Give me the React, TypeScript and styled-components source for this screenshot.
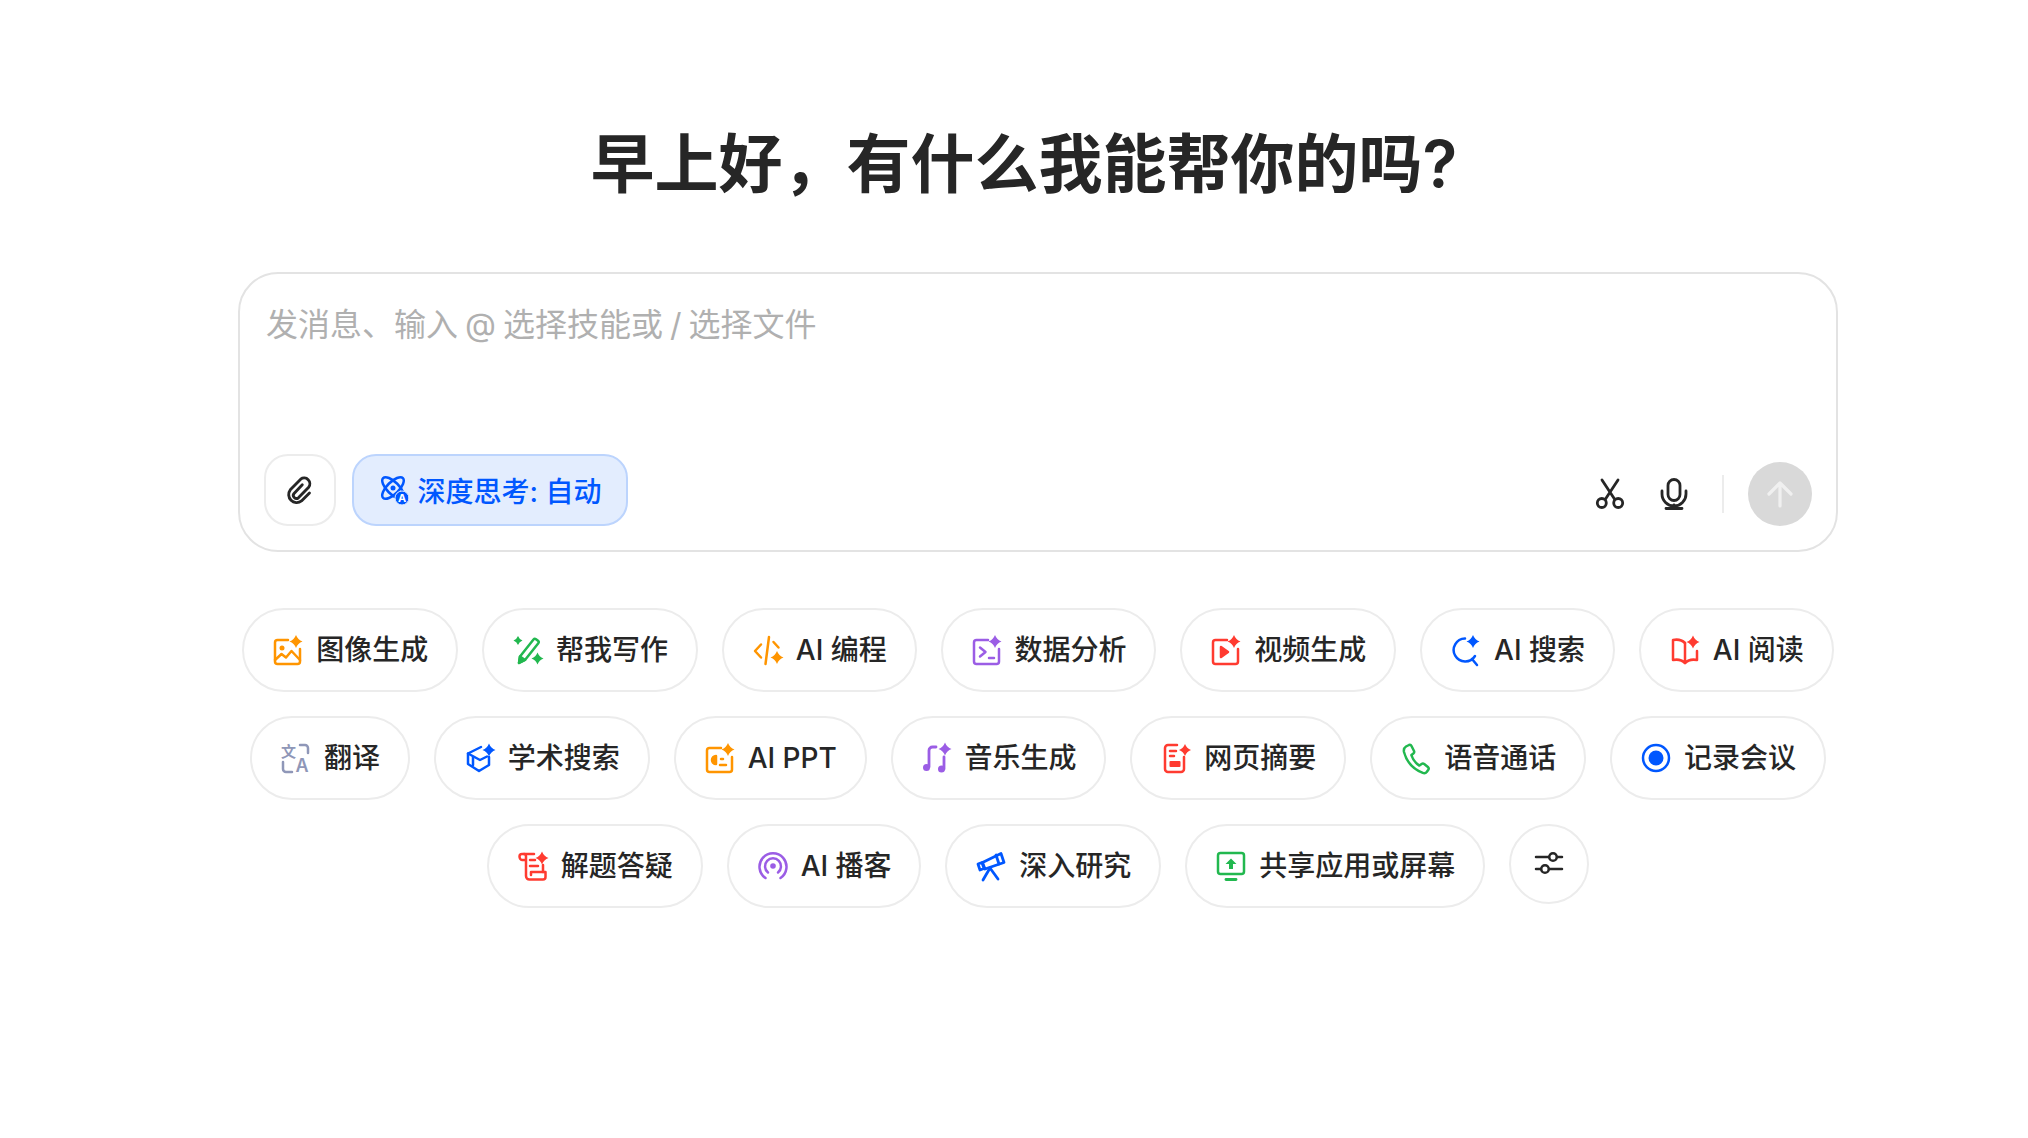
import React from 'react';
import styled, { createGlobalStyle } from 'styled-components';

const ORANGE = '#ff9500';
const GREEN = '#22b84f';
const PURPLE = '#9b5de5';
const RED = '#ff3b30';
const BLUE = '#0057ff';
const SLATE = '#8f97b8';
const DARK = '#262626';

const Star = ({ x, y, r, color }: { x: number; y: number; r: number; color: string }) => (
  <path
    d={`M${x} ${y - r}Q${x + r * 0.28} ${y - r * 0.28} ${x + r} ${y}Q${x + r * 0.28} ${y + r * 0.28} ${x} ${y + r}Q${x - r * 0.28} ${y + r * 0.28} ${x - r} ${y}Q${x - r * 0.28} ${y - r * 0.28} ${x} ${y - r}Z`}
    fill={color}
    stroke="none"
  />
);

const Glyph = ({ color, children }: { color: string; children: React.ReactNode }) => (
  <IconSvg viewBox="0 0 32 32" fill="none" stroke={color} strokeWidth="2.5" strokeLinecap="round" strokeLinejoin="round">
    {children}
  </IconSvg>
);

const icons: Record<string, React.ReactNode> = {
  image: (
    <Glyph color={ORANGE}>
      <path d="M16 6H5.500A2.500 2.500 0 0 0 3 8.500V27.500A2.500 2.500 0 0 0 5.500 30H25.500A2.500 2.500 0 0 0 28 27.500V15" />
      <path d="M3 26l6.500-6 4.500 3.500 5.500-6.500 8.500 9" />
      <circle cx="10" cy="14" r="2.500" fill={ORANGE} stroke="none" />
      <Star x={24} y={7.500} r={6.500} color={ORANGE} />
    </Glyph>
  ),
  pen: (
    <Glyph color={GREEN}>
      <path d="M7 29l1-6.500L21.500 5.500a1.800 1.800 0 0 1 2.500-.3l2 1.600a1.800 1.800 0 0 1 .3 2.500L13 26z" />
      <path d="M7 29l6-3-5-3.500z" fill={GREEN} />
      <Star x={6} y={6.500} r={4.500} color={GREEN} />
      <Star x={25.500} y={24.500} r={6} color={GREEN} />
    </Glyph>
  ),
  code: (
    <Glyph color={ORANGE}>
      <path d="M9 10.500l-6 6.500 6 6.500" />
      <path d="M17 3l-3.500 27" />
      <path d="M21.500 8l5 5.500" />
      <Star x={25} y={23.500} r={6.500} color={ORANGE} />
    </Glyph>
  ),
  data: (
    <Glyph color={PURPLE}>
      <path d="M17 6H5.500A2.500 2.500 0 0 0 3 8.500V27.500A2.500 2.500 0 0 0 5.500 30H25.500A2.500 2.500 0 0 0 28 27.500V15" />
      <path d="M9 13.500l5.500 4.500-5.500 4.500" />
      <path d="M18 24h5" />
      <Star x={24} y={7.500} r={6.500} color={PURPLE} />
    </Glyph>
  ),
  video: (
    <Glyph color={RED}>
      <path d="M17 6H5.500A2.500 2.500 0 0 0 3 8.500V27.500A2.500 2.500 0 0 0 5.500 30H25.500A2.500 2.500 0 0 0 28 27.500V15" />
      <path d="M11 13l7 5-7 5z" fill={RED} />
      <Star x={24} y={7.500} r={6.500} color={RED} />
    </Glyph>
  ),
  search: (
    <Glyph color={BLUE}>
      <path d="M15 4.500A11.500 11.500 0 1 0 25 22" />
      <path d="M22 25l5 6" />
      <Star x={23} y={7.500} r={6.500} color={BLUE} />
    </Glyph>
  ),
  read: (
    <Glyph color={RED}>
      <path d="M16 9C13 6 9 5 4 6V26c5-1 9 0 12 3 3-3 7-4 12-3V17" />
      <path d="M16 9V29" />
      <Star x={24} y={8} r={6.500} color={RED} />
    </Glyph>
  ),
  translate: (
    <Glyph color={SLATE}>
      <text x="1" y="15" fontSize="15" fontWeight="700" fontFamily="'Noto Sans CJK SC', sans-serif" fill={SLATE} stroke="none">文</text>
      <text x="15.500" y="30" fontSize="18" fontWeight="600" fontFamily="'Inter', sans-serif" fill={SLATE} stroke="none">A</text>
      <path d="M20 3h5a3 3 0 0 1 3 3v5" />
      <path d="M3 20v7a3 3 0 0 0 3 3h6" />
    </Glyph>
  ),
  academic: (
    <Glyph color={BLUE}>
      <path d="M17 5L4 11.500 16 18l7-3.500" />
      <path d="M4 11.500V22l11 7 10-6v-8" />
      <path d="M9 15v8" />
      <Star x={25} y={8} r={6.500} color={BLUE} />
    </Glyph>
  ),
  ppt: (
    <Glyph color={ORANGE}>
      <path d="M17 6H5.500A2.500 2.500 0 0 0 3 8.500V27.500A2.500 2.500 0 0 0 5.500 30H25.500A2.500 2.500 0 0 0 28 27.500V15" />
      <path d="M12 14a4 4 0 1 0 0 8z" fill={ORANGE} />
      <path d="M17 17h2M16 23h6" />
      <Star x={24} y={7.500} r={6.500} color={ORANGE} />
    </Glyph>
  ),
  music: (
    <Glyph color={PURPLE}>
      <path d="M8 25V8.500C8 6.500 9.500 5 11.500 5H15" strokeWidth="2.800" />
      <circle cx="5.500" cy="25.500" r="3.500" fill={PURPLE} stroke="none" />
      <path d="M23 15V27" strokeWidth="2.800" />
      <circle cx="20.500" cy="27" r="3.500" fill={PURPLE} stroke="none" />
      <Star x={24} y={7} r={6.500} color={PURPLE} />
    </Glyph>
  ),
  page: (
    <Glyph color={RED}>
      <path d="M17 3H8a3 3 0 0 0-3 3v21a3 3 0 0 0 3 3h13a3 3 0 0 0 3-3V15" />
      <path d="M10 9h6M10 14h4" />
      <rect x="9.500" y="19" width="11" height="6" rx="1" fill={RED} stroke="none" />
      <Star x={25} y={8} r={6} color={RED} />
    </Glyph>
  ),
  phone: (
    <Glyph color={GREEN}>
      <path d="M6 4.500l3-1.500c1-.4 2 0 2.500 1l2.500 5c.4 1 .2 2-.6 2.600l-2 1.500c1.500 4.500 4 8 8 10.500l2.200-1.600c.8-.6 1.800-.6 2.600 0l3.700 3c.8.7 1 1.800.4 2.700l-1.400 2c-1 1.300-2.600 1.800-4.100 1.200C13 27 6.500 19.500 4 10c-.4-2 .3-4.400 2-5.500z" />
    </Glyph>
  ),
  record: (
    <Glyph color={BLUE}>
      <circle cx="16" cy="16" r="13" />
      <circle cx="16" cy="16" r="7.500" fill={BLUE} stroke="none" />
    </Glyph>
  ),
  solve: (
    <Glyph color={RED}>
      <path d="M17 4H5c-1.500 0-2.500 1-2.500 2.500S3.500 10 5 10h3" />
      <path d="M7 4c1 0 2 1 2 2.500V26c0 2 1.500 3.500 3.500 3.500H26c1.500 0 2.500-1 2.500-2.500V22H14v3" />
      <path d="M26 15V22" />
      <path d="M13 10h5M13 16h8" />
      <Star x={25} y={8} r={6.500} color={RED} />
    </Glyph>
  ),
  podcast: (
    <Glyph color={PURPLE}>
      <path d="M8.500 28A13.500 13.500 0 1 1 23.500 28" />
      <path d="M11 22.500A8 8 0 1 1 21 22.500" />
      <circle cx="16" cy="16" r="2.800" fill={PURPLE} stroke="none" />
    </Glyph>
  ),
  telescope: (
    <Glyph color={BLUE} >
      <path d="M3 14l4-1.500 2 6-4 1.500z" strokeWidth="2.800" />
      <path d="M7.500 12.500L26 3.500l3 9L10 19z" strokeWidth="2.800" />
      <path d="M21 5l3 9" strokeWidth="2.800" />
      <path d="M15 18l-7 12M15 18l8 11" strokeWidth="2.800" />
    </Glyph>
  ),
  share: (
    <Glyph color={GREEN}>
      <rect x="3" y="3" width="26" height="21" rx="2.500" />
      <path d="M16 8.500l5.500 5.500H18v5h-4v-5h-3.500z" fill={GREEN} stroke="none" />
      <path d="M11 29.500h10" strokeWidth="2.800" />
    </Glyph>
  ),
  sliders: (
    <Glyph color={DARK}>
      <path d="M3 9h13M24 9h5M3 21h5M16 21h13" />
      <circle cx="20" cy="9" r="3.800" />
      <circle cx="12" cy="21" r="3.800" />
    </Glyph>
  ),
};

const chips: { icon: string; label: string }[] = [
  { icon: 'image', label: '图像生成' },
  { icon: 'pen', label: '帮我写作' },
  { icon: 'code', label: 'AI 编程' },
  { icon: 'data', label: '数据分析' },
  { icon: 'video', label: '视频生成' },
  { icon: 'search', label: 'AI 搜索' },
  { icon: 'read', label: 'AI 阅读' },
  { icon: 'translate', label: '翻译' },
  { icon: 'academic', label: '学术搜索' },
  { icon: 'ppt', label: 'AI PPT' },
  { icon: 'music', label: '音乐生成' },
  { icon: 'page', label: '网页摘要' },
  { icon: 'phone', label: '语音通话' },
  { icon: 'record', label: '记录会议' },
  { icon: 'solve', label: '解题答疑' },
  { icon: 'podcast', label: 'AI 播客' },
  { icon: 'telescope', label: '深入研究' },
  { icon: 'share', label: '共享应用或屏幕' },
];

export default function App() {
  return (
    <Page>
      <GlobalStyle />
      <Main>
        <Title>早上好，有什么我能帮你的吗?</Title>
        <Composer>
          <Placeholder>发消息、输入 @ 选择技能或 / 选择文件</Placeholder>
          <ComposerBar>
            <LeftTools>
              <AttachButton>
                <ToolSvg viewBox="0 0 28 28" fill="none" stroke={DARK} strokeWidth="2.500" strokeLinecap="round" strokeLinejoin="round">
                  <path d="M16 9.500L8.800 17a2.700 2.700 0 0 0 3.800 3.800l9-9.300a5 5 0 0 0-7-7L5.500 13.800a7 7 0 0 0 9.800 9.800l7-7" />
                </ToolSvg>
              </AttachButton>
              <ThinkButton>
                <ThinkSvg viewBox="0 0 30 30" fill="none" stroke={BLUE} strokeWidth="2.500" strokeLinecap="round">
                  <ellipse cx="14" cy="13" rx="14" ry="6" transform="rotate(45 14 13)" />
                  <ellipse cx="14" cy="13" rx="14" ry="6" transform="rotate(-45 14 13)" />
                  <circle cx="14" cy="13" r="2.500" fill={BLUE} stroke="none" />
                  <circle cx="23" cy="23" r="7" fill={BLUE} stroke="#e3edfe" strokeWidth="1" />
                  <text x="23" y="27" textAnchor="middle" fontSize="11" fontWeight="700" fontFamily="'Inter', sans-serif" fill="#fff" stroke="none">A</text>
                </ThinkSvg>
                深度思考: 自动
              </ThinkButton>
            </LeftTools>
            <RightTools>
              <PlainTool>
                <ToolSvg viewBox="0 0 32 32" fill="none" stroke={DARK} strokeWidth="2.800" strokeLinecap="round">
                  <path d="M8 2l12.500 19M24 2L11.500 21" />
                  <circle cx="7.800" cy="25" r="4.500" />
                  <circle cx="24.200" cy="25" r="4.500" />
                </ToolSvg>
              </PlainTool>
              <PlainTool>
                <ToolSvg viewBox="0 0 32 32" fill="none" stroke={DARK} strokeWidth="2.800" strokeLinecap="round">
                  <rect x="10" y="1.500" width="12" height="21" rx="6" />
                  <path d="M4 13v3a12 12 0 0 0 24 0v-3" />
                  <path d="M16 27v3M8 30.500h16" />
                </ToolSvg>
              </PlainTool>
              <Divider />
              <SendButton>
                <svg width="32" height="32" viewBox="0 0 32 32" fill="none" stroke="#f0f0f0" strokeWidth="3.200" strokeLinecap="round" strokeLinejoin="round">
                  <path d="M16 28V5M5 16L16 5l11 11" />
                </svg>
              </SendButton>
            </RightTools>
          </ComposerBar>
        </Composer>
        <ChipList>
          {chips.map((chip) => (
            <Chip key={chip.label}>
              {icons[chip.icon]}
              {chip.label}
            </Chip>
          ))}
          <RoundChip>{icons.sliders}</RoundChip>
        </ChipList>
      </Main>
    </Page>
  );
}

const GlobalStyle = createGlobalStyle`
  html, body {
    margin: 0;
    background: #fff;
  }
  body {
    font-family: "Inter", "Noto Sans CJK SC", sans-serif;
    color: ${DARK};
  }
`;

const Page = styled.div`
  width: 2028px;
  height: 1138px;
  padding: 128px 190px 0 238px;
  box-sizing: border-box;
  overflow: hidden;
`;

const Main = styled.main`
  display: flex;
  flex-direction: column;
`;

const Title = styled.h1`
  margin: 0 28px 70px 0;
  font-size: 64px;
  line-height: 72px;
  padding-bottom: 2px;
  font-weight: 600;
  text-align: center;
  color: ${DARK};
`;

const Composer = styled.div`
  box-sizing: border-box;
  height: 280px;
  border: 2px solid #e3e3e3;
  border-radius: 40px;
  padding: 28px 24px 24px 24px;
  display: flex;
  flex-direction: column;
  justify-content: space-between;
`;

const Placeholder = styled.div`
  padding-left: 2px;
  font-size: 32px;
  line-height: 46px;
  word-spacing: -2px;
  color: #b0b0b0;
`;

const ComposerBar = styled.div`
  display: flex;
  align-items: flex-end;
  justify-content: space-between;
`;

const LeftTools = styled.div`
  display: flex;
  gap: 16px;
`;

const RightTools = styled.div`
  display: flex;
  align-items: center;
`;

const AttachButton = styled.div`
  box-sizing: border-box;
  width: 72px;
  height: 72px;
  border: 2px solid #ececec;
  border-radius: 24px;
  display: flex;
  align-items: center;
  justify-content: center;
`;

const ThinkButton = styled.div`
  box-sizing: border-box;
  height: 72px;
  width: 276px;
  border: 2px solid #bcd4fd;
  border-radius: 24px;
  background: #e3edfe;
  color: ${BLUE};
  font-size: 28px;
  font-weight: 500;
  display: flex;
  align-items: center;
  justify-content: center;
  gap: 9px;
  white-space: nowrap;
`;

const ThinkSvg = styled.svg`
  width: 30px;
  height: 30px;
  flex-shrink: 0;
`;

const ToolSvg = styled.svg`
  width: 32px;
  height: 32px;
  display: block;
`;

const PlainTool = styled.div`
  width: 64px;
  height: 64px;
  display: flex;
  align-items: center;
  justify-content: center;
`;

const Divider = styled.div`
  width: 2px;
  height: 38px;
  margin: 0 24px 0 16px;
  background: #ececec;
`;

const SendButton = styled.div`
  width: 64px;
  height: 64px;
  border-radius: 50%;
  background: #d9d9d9;
  display: flex;
  align-items: center;
  justify-content: center;
`;

const ChipList = styled.div`
  margin-top: 56px;
  display: flex;
  flex-wrap: wrap;
  justify-content: center;
  align-items: flex-start;
  gap: 24px;
`;

const Chip = styled.div`
  box-sizing: border-box;
  height: 84px;
  padding: 0 27.9px;
  border: 2px solid #ececec;
  border-radius: 42px;
  display: flex;
  align-items: center;
  gap: 12px;
  font-size: 28px;
  font-weight: 500;
  line-height: 38px;
  white-space: nowrap;
`;

const RoundChip = styled.div`
  box-sizing: border-box;
  width: 80px;
  height: 80px;
  border: 2px solid #ececec;
  border-radius: 50%;
  display: flex;
  align-items: center;
  justify-content: center;
`;

const IconSvg = styled.svg`
  width: 32px;
  height: 32px;
  flex-shrink: 0;
  overflow: visible;
`;
